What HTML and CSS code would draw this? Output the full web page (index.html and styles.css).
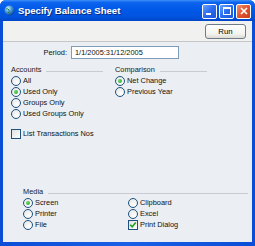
FILE: index.html
```html
<!DOCTYPE html>
<html lang="en">
<head>
    <meta charset="UTF-8">
    <title>Specify Balance Sheet</title>
    <link rel="stylesheet" href="styles.css">
</head>
<body>
    <div class="window">
        <!-- Title bar -->
        <div class="titlebar">
            <svg class="app-icon" width="11" height="11" viewBox="0 0 11 11">
                <defs>
                    <radialGradient id="globe" cx="0.35" cy="0.3" r="0.75">
                        <stop offset="0" stop-color="#d8f0ff"/>
                        <stop offset="0.45" stop-color="#4aa0e0"/>
                        <stop offset="1" stop-color="#0a3c8c"/>
                    </radialGradient>
                </defs>
                <circle cx="5.5" cy="5.5" r="5" fill="url(#globe)"/>
                <path d="M2 4 Q4 3 5 5 Q6 7 4 8" fill="none" stroke="#2a8040" stroke-width="1"/>
            </svg>
            <span class="title">Specify Balance Sheet</span>
            <div class="caption-buttons">
                <span class="cbtn min"><span class="bar"></span></span>
                <span class="cbtn max"><span class="box"></span></span>
                <span class="cbtn close">
                    <svg width="8" height="8" viewBox="0 0 8 8"><path d="M1 1 L7 7 M7 1 L1 7" stroke="#fff" stroke-width="1.6"/></svg>
                </span>
            </div>
        </div>

        <div class="frame">
            <div class="toolbar">
                <button class="run">Run</button>
            </div>

            <div class="content">
                <div class="period-row">
                    <label class="period-label">Period:</label>
                    <div class="field">1/1/2005:31/12/2005</div>
                </div>

                <div class="groups">
                    <div class="group">
                        <div class="group-head">Accounts</div>
                        <div class="opt"><span class="radio"></span>All</div>
                        <div class="opt"><span class="radio on"></span>Used Only</div>
                        <div class="opt"><span class="radio"></span>Groups Only</div>
                        <div class="opt"><span class="radio"></span>Used Groups Only</div>
                    </div>
                    <div class="group">
                        <div class="group-head">Comparison</div>
                        <div class="opt"><span class="radio on"></span>Net Change</div>
                        <div class="opt"><span class="radio"></span>Previous Year</div>
                    </div>
                </div>

                <div class="opt list-nos"><span class="check"></span>List Transactions Nos</div>

                <!-- Media -->
                <div class="media">
                    <div class="group-head">Media</div>
                    <div class="media-cols">
                        <div class="media-col">
                            <div class="opt"><span class="radio on"></span>Screen</div>
                            <div class="opt"><span class="radio"></span>Printer</div>
                            <div class="opt"><span class="radio"></span>File</div>
                        </div>
                        <div class="media-col">
                            <div class="opt"><span class="radio"></span>Clipboard</div>
                            <div class="opt"><span class="radio"></span>Excel</div>
                            <div class="opt"><span class="check on">
                                <svg width="8" height="8" viewBox="0 0 8 8"><path d="M1.2 3.8 L3.2 5.8 L6.8 1.6" fill="none" stroke="#21a121" stroke-width="1.6"/></svg>
                            </span>Print Dialog</div>
                        </div>
                    </div>
                </div>
            </div>
        </div>
    </div>
</body>
</html>
```

FILE: styles.css
```css
body {
    margin: 0;
    background: #ffffff;
    font-family: "Liberation Sans", Arial, sans-serif;
    font-size: 7.4px;
    color: #111;
}
.window {
    width: 255px;
    height: 246px;
    display: flex;
    flex-direction: column;
    background: linear-gradient(to right, #0a4ed8, #1a5fe8 50%, #0a4ed8);
    border-radius: 6px 6px 0 0;
    overflow: hidden;
}
/* Title bar */
.titlebar {
    height: 21px;
    flex: none;
    display: flex;
    align-items: center;
    padding: 0 4px 0 4px;
    background: linear-gradient(#3d8ff8 0%, #0b63ee 12%, #0058e8 45%, #0053de 80%, #0046c8 100%);
}
.app-icon {
    margin-right: 3px;
}
.title {
    color: #fff;
    font-weight: bold;
    font-size: 9.6px;
    text-shadow: 1px 1px 0 #0a2a80;
    flex: 1;
}
.caption-buttons {
    display: flex;
    gap: 2px;
    margin-top: 1px;
}
.cbtn {
    width: 13px;
    height: 13px;
    border: 1px solid #fff;
    border-radius: 2px;
    background: linear-gradient(135deg, #6aa0ff, #2a6cf0 50%, #1a55d8);
    position: relative;
    display: flex;
    align-items: center;
    justify-content: center;
}
.cbtn.close {
    background: linear-gradient(135deg, #f09070, #e0542f 50%, #c83c18);
}
.cbtn .bar {
    position: absolute;
    left: 3px;
    bottom: 3px;
    width: 5px;
    height: 2px;
    background: #fff;
}
.cbtn .box {
    width: 6px;
    height: 5px;
    border: 1px solid #fff;
    border-top-width: 2px;
}
/* Window body */
.frame {
    flex: 1;
    margin: 0 3px 4px 3px;
    display: flex;
    flex-direction: column;
    background: #ebeef2;
}
.toolbar {
    height: 17px;
    flex: none;
    display: flex;
    justify-content: flex-end;
    align-items: flex-start;
    padding: 3px 6px 0 0;
    background: #f1f1ef;
    border-bottom: 1px solid #c4c6c8;
}
.run {
    width: 41px;
    height: 15px;
    padding: 0;
    border: 1px solid #6f7b88;
    border-radius: 3px;
    background: linear-gradient(#ffffff, #f2f2ee 70%, #dcdcd4);
    font-family: inherit;
    font-size: 7.8px;
    color: #000;
}
.content {
    padding-top: 4px;
}
.period-row {
    display: flex;
    align-items: center;
    height: 13px;
}
.period-label {
    width: 64px;
    text-align: right;
}
.field {
    margin-left: 4px;
    width: 108px;
    height: 13px;
    box-sizing: border-box;
    border: 1px solid #7f9db9;
    background: #fff;
    padding-left: 3px;
    line-height: 11px;
}
/* Groups */
.groups {
    display: flex;
    gap: 12px;
    margin-top: 5px;
    padding-left: 8px;
}
.group {
    width: 92px;
}
.group-head {
    display: flex;
    align-items: center;
    height: 11px;
    color: #1a1a1a;
}
.group-head::after {
    content: "";
    flex: 1;
    height: 1px;
    margin: 3px 0 0 5px;
    background: #c8ccd2;
}
.opt {
    display: flex;
    align-items: center;
    height: 11px;
    gap: 2px;
    white-space: nowrap;
}
.radio {
    width: 10px;
    height: 10px;
    box-sizing: border-box;
    border: 1px solid #1c5180;
    border-radius: 50%;
    background: radial-gradient(circle at 65% 70%, #ffffff, #e8e8e4 80%);
    display: flex;
    align-items: center;
    justify-content: center;
}
.radio.on::after {
    content: "";
    width: 4px;
    height: 4px;
    border-radius: 50%;
    background: radial-gradient(circle at 35% 35%, #6cd86c, #21a121);
}
.check {
    width: 10px;
    height: 10px;
    box-sizing: border-box;
    border: 1px solid #1c5180;
    background: linear-gradient(135deg, #e0e0dc, #ffffff);
    display: flex;
    align-items: center;
    justify-content: center;
}
.list-nos {
    margin: 9px 0 0 8px;
}
/* Media */
.media {
    margin-top: 47px;
    padding: 0 4px 0 20px;
}
.media-cols {
    display: flex;
}
.media-col {
    width: 105px;
}
```
